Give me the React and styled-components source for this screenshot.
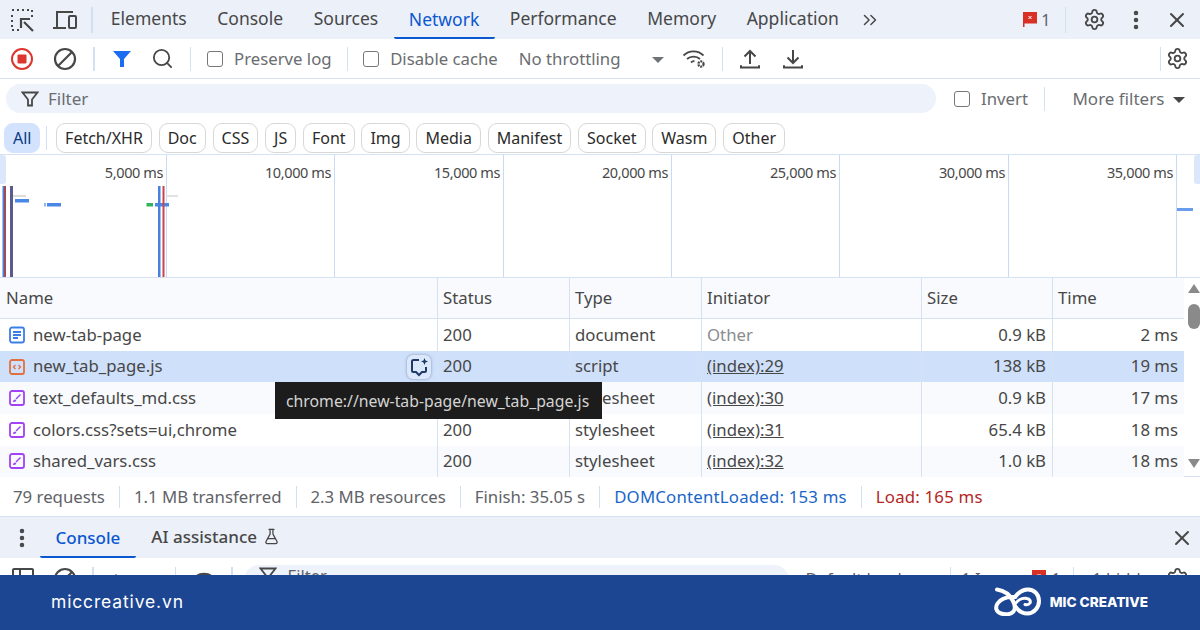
import styled, { createGlobalStyle } from "styled-components";
import { Settings, X, EllipsisVertical, ChevronsRight, Search, FlaskConical, Eye } from "lucide-react";

const GlobalStyle = createGlobalStyle`
  html, body { margin: 0; padding: 0; background: #fff; }
  body { font-family: "Noto Sans", "Open Sans", sans-serif; color: #474747; }
  * { box-sizing: border-box; }
`;

const Page = styled.div`
  width: 1200px;
  height: 630px;
  overflow: hidden;
  display: flex;
  flex-direction: column;
`;

const TabBar = styled.div`
  height: 39px;
  flex: none;
  display: flex;
  align-items: center;
  background: #ebf0f9;
  padding-left: 10px;
`;

const IconSlot = styled.span`
  display: inline-flex;
  align-items: center;
  justify-content: center;
  flex: none;
  width: ${(p) => p.$w || 24}px;
  margin-right: ${(p) => p.$mr || 0}px;
  margin-left: ${(p) => p.$ml || 0}px;
  color: ${(p) => p.$color || "#474747"};
`;

const Divider = styled.span`
  flex: none;
  width: 1.5px;
  height: ${(p) => p.$h || 24}px;
  background: #d3e0f3;
  margin-left: ${(p) => p.$ml || 0}px;
  margin-right: ${(p) => p.$mr || 0}px;
`;

const Tab = styled.div`
  height: 39px;
  padding: 0 15.3px;
  display: flex;
  align-items: center;
  font-size: 17.5px;
  line-height: 1;
  white-space: nowrap;
  color: ${(p) => (p.$active ? "#0b57d0" : "#474747")};
  border-bottom: 2.5px solid ${(p) => (p.$active ? "#0b57d0" : "transparent")};
  padding-top: ${(p) => (p.$active ? "2.5px" : 0)};
  border-bottom-left-radius: 2px;
  border-bottom-right-radius: 2px;
`;

const Spacer = styled.div`
  flex: 1;
`;

const IssueCount = styled.span`
  font-size: 16px;
  color: #5f6368;
  margin-left: 4px;
`;

const Toolbar = styled.div`
  height: 40px;
  flex: none;
  display: flex;
  align-items: center;
  background: #fff;
  border-bottom: 1.5px solid #d6e2f3;
  padding-left: 10px;
`;

const CheckItem = styled.label`
  display: flex;
  align-items: center;
  gap: 11px;
  font-size: 16.75px;
  color: #6a6d70;
  white-space: nowrap;
  margin-left: ${(p) => p.$ml || 0}px;
`;

const Box = styled.span`
  width: 16px;
  height: 16px;
  border: 1.5px solid #75787b;
  border-radius: 3px;
  flex: none;
`;

const Throttle = styled.span`
  font-size: 16.75px;
  color: #6a6d70;
  white-space: nowrap;
  margin-left: 21px;
`;

const Caret = styled.span`
  width: 0;
  height: 0;
  flex: none;
  border-left: ${(p) => p.$s || 6}px solid transparent;
  border-right: ${(p) => p.$s || 6}px solid transparent;
  border-top: ${(p) => p.$s || 6}px solid ${(p) => p.$color || "#6f7276"};
  margin-left: ${(p) => p.$ml || 0}px;
  margin-top: 2px;
`;

const FilterRow = styled.div`
  height: 39px;
  flex: none;
  display: flex;
  align-items: center;
  padding: 0 18px 0 6px;
`;

const FilterPill = styled.div`
  width: 930px;
  height: 29px;
  flex: none;
  border-radius: 15px;
  background: #edf2fb;
  display: flex;
  align-items: center;
  padding-left: 15px;
  gap: 9px;
  font-size: 17px;
  color: #6a6d70;
`;

const MoreFilters = styled.span`
  font-size: 17px;
  color: #6a6d70;
  white-space: nowrap;
`;

const ChipRow = styled.div`
  height: 37px;
  flex: none;
  display: flex;
  align-items: center;
  gap: 6.8px;
  padding: 3px 0 0 4px;
  border-bottom: 1.5px solid #d6e2f3;
`;

const Chip = styled.div`
  height: 30px;
  padding: 0 8px;
  display: flex;
  align-items: center;
  border-radius: 9px;
  font-size: 16px;
  line-height: 1;
  white-space: nowrap;
  color: ${(p) => (p.$active ? "#0a3a85" : "#2b2b2b")};
  background: ${(p) => (p.$active ? "#d3e3fd" : "#fff")};
  border: 1px solid ${(p) => (p.$active ? "#d3e3fd" : "#d7d7d7")};
`;

const ChipGap = styled.span`
  width: 1px;
  height: 24px;
  background: #d3e0f3;
  margin: 0 2px 0 -1px;
  flex: none;
`;

const Overview = styled.div`
  position: relative;
  height: 123px;
  flex: none;
  display: flex;
  border-bottom: 1.5px solid #d6e2f3;
`;

const Tick = styled.div`
  width: ${(p) => p.$w}px;
  flex: none;
  border-right: 1.5px solid ${(p) => (p.$last ? "transparent" : "#c9daf5")};
  text-align: right;
  font-size: 14.5px;
  letter-spacing: -0.4px;
  color: #474747;
  padding: 7px 3px 0 0;
  white-space: nowrap;
`;

const OverviewChart = styled.svg`
  position: absolute;
  left: 0;
  top: 0;
`;

const Table = styled.div`
  position: relative;
  flex: none;
  height: 199px;
  display: flex;
  border-bottom: 1.5px solid #d6e2f3;
`;

const Rows = styled.div`
  width: 1184px;
  flex: none;
`;

const Row = styled.div`
  display: grid;
  grid-template-columns: 437px 132px 132px 220px 131px 132px;
  height: ${(p) => p.$h}px;
  background: ${(p) => p.$bg || "#fff"};
  border-bottom: ${(p) => (p.$head ? "1.5px solid #d6e2f3" : "none")};
`;

const Cell = styled.div`
  display: flex;
  align-items: center;
  justify-content: ${(p) => (p.$right ? "flex-end" : "flex-start")};
  padding: 0 6px 0 ${(p) => (p.$first ? 6 : 5)}px;
  font-size: 16.75px;
  line-height: 1;
  white-space: nowrap;
  color: ${(p) => p.$color || "#474747"};
  text-decoration: ${(p) => (p.$link ? "underline" : "none")};
  border-left: ${(p) => (p.$first ? "none" : "1px solid #d6e2f3")};
`;

const NameText = styled.span`
  margin-left: 7px;
  flex: 1;
`;

const AiButton = styled.span`
  width: 24px;
  height: 24px;
  flex: none;
  border-radius: 6px;
  background: #dbe7fb;
  box-shadow: 0 0 3px rgba(30, 50, 90, 0.45);
  display: flex;
  align-items: center;
  justify-content: center;
`;

const Tooltip = styled.div`
  position: absolute;
  left: 275px;
  top: 104px;
  width: 327px;
  height: 37px;
  background: #1c1c1c;
  color: #d4d4d4;
  font-size: 15.8px;
  display: flex;
  align-items: center;
  padding-left: 11px;
  white-space: nowrap;
`;

const Scrollbar = styled.div`
  width: 16px;
  flex: none;
  display: flex;
  flex-direction: column;
  align-items: center;
  padding: 6px 0 0 3px;
  background: #fff;
`;

const Arrow = styled.span`
  width: 0;
  height: 0;
  border-left: 6.5px solid transparent;
  border-right: 6.5px solid transparent;
  border-top: ${(p) => (p.$down ? "9px solid #8a8a8a" : "none")};
  border-bottom: ${(p) => (p.$down ? "none" : "9px solid #8a8a8a")};
`;

const Thumb = styled.span`
  width: 12px;
  height: 25px;
  border-radius: 6px;
  background: #8a8a8a;
  margin-top: 11px;
  margin-bottom: auto;
`;

const DownArrow = styled(Arrow)`
  margin-bottom: 8px;
`;

const Summary = styled.div`
  height: 40px;
  flex: none;
  display: flex;
  align-items: center;
  padding-left: 13px;
  font-size: 16.8px;
  white-space: nowrap;
  border-bottom: 1.5px solid #d6e2f3;
`;

const Stat = styled.span`
  color: ${(p) => p.$color || "#5f6368"};
  letter-spacing: ${(p) => p.$ls || 0}px;
  padding-right: 14px;
  margin-right: 14px;
  border-right: ${(p) => (p.$plain ? "none" : "1.5px solid #d3e0f3")};
  line-height: 22px;
`;

const DrawerTabs = styled.div`
  height: 41px;
  flex: none;
  display: flex;
  align-items: center;
  background: #ebf0f9;
  padding-left: 10px;
`;

const DrawerTab = styled(Tab)`
  height: 41px;
  padding-left: 15.5px;
  padding-right: 15.5px;
  gap: 6px;
  font-weight: 500;
  font-size: 17px;
`;

const DrawerTools = styled.div`
  height: 17px;
  flex: none;
  overflow: hidden;
  display: flex;
  align-items: flex-start;
  padding: 9px 0 0 11px;
  font-size: 16.5px;
  line-height: 20px;
  color: #5f6368;
  white-space: nowrap;
`;

const ClippedPill = styled.div`
  width: 545px;
  height: 30px;
  margin: -2px 17px 0 0;
  flex: none;
  border-radius: 15px;
  background: #edf2fb;
  padding: 1px 0 0 15px;
  display: flex;
  gap: 11px;
`;

const ToolText = styled.span`
  flex: none;
  margin: 2px ${(p) => p.$mr || 0}px 0 ${(p) => p.$ml || 0}px;
`;

const ToolFlag = styled.span`
  flex: none;
  margin-top: 3px;
  line-height: 0;
`;

const Footer = styled.div`
  flex: 1;
  background: #1c4592;
  display: flex;
  align-items: center;
  justify-content: space-between;
  padding: 0 52px 2px 51px;
  color: #fff;
`;

const Domain = styled.span`
  font-family: "Inter", sans-serif;
  font-size: 17.5px;
  letter-spacing: 0.85px;
`;

const Brand = styled.div`
  display: flex;
  align-items: center;
  gap: 9px;
`;

const BrandName = styled.span`
  font-family: "Inter", sans-serif;
  font-size: 13.6px;
  font-weight: 800;
`;

const InspectIcon = () => (
  <svg width="24" height="24" viewBox="0 0 24 24" fill="none" stroke="#474747" strokeWidth="2">
    <path d="M2 2h2M7 2h2M12 2h2M17 2h2M22 2v2M22 7v2M2 7v2M2 12v2M2 17v2M2 22h2M7 22h2" />
    <path d="M23 23l-9-9M11 20v-9h9" strokeWidth="2.2" />
  </svg>
);

const DeviceIcon = () => (
  <svg width="26" height="22" viewBox="0 0 26 22" fill="none" stroke="#474747" strokeWidth="2">
    <path d="M5 18V3h16M1 19h13" />
    <rect x="17" y="7" width="7" height="12" rx="1" />
  </svg>
);

const RecordIcon = () => (
  <svg width="24" height="24" viewBox="0 0 24 24">
    <circle cx="12" cy="12" r="10" fill="none" stroke="#dc362e" strokeWidth="2" />
    <rect x="7.5" y="7.5" width="9" height="9" rx="1" fill="#dc362e" />
  </svg>
);

const ClearIcon = () => (
  <svg width="24" height="24" viewBox="0 0 24 24" fill="none" stroke="#474747" strokeWidth="2.2">
    <circle cx="12" cy="12" r="10" />
    <path d="M19 5L5 19" />
  </svg>
);

const SolidFunnel = () => (
  <svg width="20" height="20" viewBox="0 0 20 20">
    <path d="M1 2h18l-7 8v8H8v-8z" fill="#1a6cf0" />
  </svg>
);

const OutlineFunnel = () => (
  <svg width="18" height="18" viewBox="0 0 18 18" fill="none" stroke="#474747" strokeWidth="1.8">
    <path d="M1.5 2.5h15l-5.5 7v6h-4v-6z" />
  </svg>
);

const WifiGear = () => (
  <svg width="26" height="22" viewBox="0 0 26 22" fill="none" stroke="#474747" strokeWidth="1.8">
    <path d="M1.5 7.5C7 2 16 2 21.5 7.5M5 11c3.5-3.3 9.5-3.3 13 0M9 14.5c1-1 2.5-1.5 3.5-1.2" />
    <circle cx="19" cy="16" r="2.6" strokeWidth="2.2" strokeDasharray="2 0.8" />
  </svg>
);

const UploadIcon = () => (
  <svg width="22" height="22" viewBox="0 0 22 22" fill="none" stroke="#474747" strokeWidth="2">
    <path d="M11 16V3M5.5 8.5L11 3l5.5 5.5" />
    <path d="M2 18v1.5h18V18" strokeLinecap="round" />
  </svg>
);

const DownloadIcon = () => (
  <svg width="22" height="22" viewBox="0 0 22 22" fill="none" stroke="#474747" strokeWidth="2">
    <path d="M11 2v13M5.5 9.5L11 15l5.5-5.5" />
    <path d="M2 18v1.5h18V18" strokeLinecap="round" />
  </svg>
);

const DockIcon = () => (
  <svg width="24" height="22" viewBox="0 0 24 22" fill="none" stroke="#474747" strokeWidth="2">
    <rect x="2" y="2" width="20" height="18" rx="1" />
    <path d="M9 2v18" />
  </svg>
);

const IssueFlag = () => (
  <svg width="14" height="15" viewBox="0 0 14 15">
    <path d="M0 0h14v11.5H1.5V15H0z" fill="#d93025" />
    <path d="M5.5 4l3 3M8.5 4l-3 3" stroke="#fff" strokeWidth="1" />
  </svg>
);

const FileIcon = ({ kind }) => {
  if (kind === "doc")
    return (
      <svg width="18" height="18" viewBox="0 0 18 18" fill="none" stroke="#3b7ee8" strokeWidth="1.8">
        <rect x="2" y="1.5" width="14" height="15" rx="2" />
        <path d="M5 6h8M5 9h8M5 12h5" />
      </svg>
    );
  if (kind === "script")
    return (
      <svg width="18" height="18" viewBox="0 0 18 18" fill="none" stroke="#e0703f" strokeWidth="1.8">
        <rect x="2" y="2" width="14" height="14" rx="2" />
        <path d="M7.5 7L5.5 9l2 2M10.5 7l2 2-2 2" strokeWidth="1.3" />
      </svg>
    );
  return (
    <svg width="18" height="18" viewBox="0 0 18 18" fill="none" stroke="#a142f4" strokeWidth="1.8">
      <rect x="2" y="2" width="14" height="14" rx="2" />
      <path d="M12.5 5.5L8 10" strokeWidth="1.5" />
      <path d="M5 13c0-1.5 1-2.5 2-2.5s1.500.8 1 1.500-1.500 1-3 1z" fill="#a142f4" stroke="none" />
    </svg>
  );
};

const AiIcon = () => (
  <svg width="19" height="20" viewBox="0 0 19 20" fill="none" stroke="#1f3a66" strokeWidth="2">
    <path d="M9 3H3.5A1.5 1.5 0 0 0 2 4.5v9A1.5 1.5 0 0 0 3.5 15H6l3 3 3-3h2.5a1.5 1.5 0 0 0 1.5-1.5V10" />
    <path d="M14.5 1l1 2.5L18 4.5l-2.5 1-1 2.5-1-2.5-2.5-1 2.5-1z" fill="#1f3a66" stroke="none" />
  </svg>
);

const MicLogo = () => (
  <svg width="47" height="29" viewBox="0 0 47 29" fill="none" stroke="#fff" strokeWidth="4" strokeLinecap="round">
    <path d="M3 2.5C10 3.5 16 8 19 14c2 4 2.5 8 .5 10.5-2.5 3-8 3.5-12.5 2-5-1.5-6-6-3.5-10C7 11 14 9.5 21 10" />
    <path d="M21 10c3-4 8-7.5 13-7.5 6.5 0 11 5 11 11.5S40 26.500 33.500 26.500c-5 0-9-2.500-12-7" />
    <path d="M22 16c2.5-3.500 7-5.500 11-4.500 2.500.5 4 2.500 3 4.500-1 1.500-3 2-5 1.500" strokeWidth="3" />
  </svg>
);

const tabs = ["Elements", "Console", "Sources", "Network", "Performance", "Memory", "Application"];
const chips = ["Fetch/XHR", "Doc", "CSS", "JS", "Font", "Img", "Media", "Manifest", "Socket", "Wasm", "Other"];
const ticks = [
  ["5,000 ms", 167],
  ["10,000 ms", 168],
  ["15,000 ms", 169],
  ["20,000 ms", 168],
  ["25,000 ms", 168],
  ["30,000 ms", 169],
  ["35,000 ms", 168],
  ["", 23],
];

const requests = [
  { kind: "doc", name: "new-tab-page", type: "document", init: "Other", size: "0.9 kB", time: "2 ms", h: 32 },
  { kind: "script", name: "new_tab_page.js", type: "script", init: "(index):29", size: "138 kB", time: "19 ms", h: 31, bg: "#cfe0fb" },
  { kind: "css", name: "text_defaults_md.css", type: "stylesheet", init: "(index):30", size: "0.9 kB", time: "17 ms", h: 32, bg: "#f8fafd" },
  { kind: "css", name: "colors.css?sets=ui,chrome", type: "stylesheet", init: "(index):31", size: "65.4 kB", time: "18 ms", h: 32 },
  { kind: "css", name: "shared_vars.css", type: "stylesheet", init: "(index):32", size: "1.0 kB", time: "18 ms", h: 30.5, bg: "#f8fafd" },
];

function App() {
  return (
    <Page>
      <GlobalStyle />
      <TabBar>
        <IconSlot $w={24} $mr={18}><InspectIcon /></IconSlot>
        <IconSlot $w={26} $mr={13}><DeviceIcon /></IconSlot>
        <Divider $h={26} $mr={3} />
        {tabs.map((t) => (
          <Tab key={t} $active={t === "Network"}>{t}</Tab>
        ))}
        <IconSlot $w={22} $ml={5}><ChevronsRight size={24} strokeWidth={1.6} /></IconSlot>
        <Spacer />
        <IssueFlag />
        <IssueCount>1</IssueCount>
        <Divider $h={26} $ml={14} $mr={16} />
        <IconSlot $w={24} $mr={18}><Settings size={23} strokeWidth={1.9} /></IconSlot>
        <IconSlot $w={24} $mr={17}><EllipsisVertical size={24} strokeWidth={2.5} /></IconSlot>
        <IconSlot $w={24} $mr={11}><X size={24} strokeWidth={2} /></IconSlot>
      </TabBar>

      <Toolbar>
        <IconSlot $w={24} $mr={19}><RecordIcon /></IconSlot>
        <IconSlot $w={24} $mr={16}><ClearIcon /></IconSlot>
        <Divider $mr={17} />
        <IconSlot $w={20} $mr={19}><SolidFunnel /></IconSlot>
        <IconSlot $w={24} $mr={15}><Search size={23} strokeWidth={1.9} /></IconSlot>
        <Divider $mr={16} />
        <CheckItem><Box />Preserve log</CheckItem>
        <Divider $ml={15} $mr={15} />
        <CheckItem><Box />Disable cache</CheckItem>
        <Throttle>No throttling</Throttle>
        <Caret $ml={31} />
        <IconSlot $w={26} $ml={18} $mr={14}><WifiGear /></IconSlot>
        <Divider $mr={15} />
        <IconSlot $w={24} $mr={19}><UploadIcon /></IconSlot>
        <IconSlot $w={24}><DownloadIcon /></IconSlot>
        <Spacer />
        <Divider $mr={4} />
        <IconSlot $w={24} $mr={11}><Settings size={23} strokeWidth={1.9} /></IconSlot>
      </Toolbar>

      <FilterRow>
        <FilterPill>
          <OutlineFunnel />
          Filter
        </FilterPill>
        <CheckItem $ml={18}><Box />Invert</CheckItem>
        <Divider $ml={16} $mr={27} />
        <MoreFilters>More filters</MoreFilters>
        <Caret $ml={9} $color="#474747" />
      </FilterRow>

      <ChipRow>
        <Chip $active>All</Chip>
        <ChipGap />
        {chips.map((c) => (
          <Chip key={c}>{c}</Chip>
        ))}
      </ChipRow>

      <Overview>
        {ticks.map(([label, w], i) => (
          <Tick key={i} $w={w} $last={i === ticks.length - 1}>{label}</Tick>
        ))}
        <OverviewChart width="1200" height="122" viewBox="0 0 1200 122">
          <rect x="-3" y="0" width="9" height="29" rx="3" fill="#dbe7fb" />
          <rect x="1194" y="0" width="9" height="29" rx="3" fill="#dbe7fb" />
          <rect x="2.5" y="31" width="1.5" height="91" fill="#4a80dd" />
          <rect x="4" y="31" width="2" height="91" fill="#a14a55" />
          <rect x="10" y="31" width="3" height="91" fill="#5c5a8c" />
          <rect x="13" y="40" width="13" height="2" fill="#dcdcdc" />
          <rect x="15" y="44" width="14" height="3.5" fill="#4a88e8" />
          <rect x="44" y="48" width="2" height="3.5" fill="#8fb6ef" />
          <rect x="47" y="48" width="14" height="3.5" fill="#4a88e8" />
          <rect x="146.5" y="48" width="6.5" height="3.5" fill="#34b45c" />
          <rect x="155" y="48" width="14" height="3.5" fill="#4a88e8" />
          <rect x="166" y="40" width="12" height="2" fill="#e2e2e2" />
          <rect x="158" y="31" width="2.5" height="91" fill="#4a80dd" />
          <rect x="162.5" y="31" width="2" height="91" fill="#c9434a" />
          <rect x="1177" y="53" width="16" height="3" fill="#6a9cec" />
        </OverviewChart>
      </Overview>

      <Table>
        <Rows>
          <Row $h={41} $head $bg="#f8fafd">
            <Cell $first>Name</Cell>
            <Cell>Status</Cell>
            <Cell>Type</Cell>
            <Cell>Initiator</Cell>
            <Cell>Size</Cell>
            <Cell>Time</Cell>
          </Row>
          {requests.map((r) => (
            <Row key={r.name} $h={r.h} $bg={r.bg}>
              <Cell $first>
                <IconSlot $w={18} $ml={2}><FileIcon kind={r.kind} /></IconSlot>
                <NameText>{r.name}</NameText>
                {r.kind === "script" && <AiButton><AiIcon /></AiButton>}
              </Cell>
              <Cell>200</Cell>
              <Cell>{r.type}</Cell>
              <Cell $link={r.init !== "Other"} $color={r.init === "Other" ? "#8a8d90" : "#474747"}>{r.init}</Cell>
              <Cell $right>{r.size}</Cell>
              <Cell $right>{r.time}</Cell>
            </Row>
          ))}
        </Rows>
        <Scrollbar>
          <Arrow />
          <Thumb />
          <DownArrow $down />
        </Scrollbar>
        <Tooltip>chrome://new-tab-page/new_tab_page.js</Tooltip>
      </Table>

      <Summary>
        <Stat>79 requests</Stat>
        <Stat>1.1 MB transferred</Stat>
        <Stat>2.3 MB resources</Stat>
        <Stat>Finish: 35.05 s</Stat>
        <Stat $color="#1a66c9" $ls={0.2}>DOMContentLoaded: 153 ms</Stat>
        <Stat $color="#b3261e" $plain $ls={0.2}>Load: 165 ms</Stat>
      </Summary>

      <DrawerTabs>
        <IconSlot $w={24} $mr={6}><EllipsisVertical size={24} strokeWidth={2.5} /></IconSlot>
        <DrawerTab $active>Console</DrawerTab>
        <DrawerTab>AI assistance<FlaskConical size={17} strokeWidth={1.8} /></DrawerTab>
        <Spacer />
        <IconSlot $w={24} $mr={6}><X size={24} strokeWidth={2} /></IconSlot>
      </DrawerTabs>

      <DrawerTools>
        <IconSlot $w={24} $mr={18}><DockIcon /></IconSlot>
        <IconSlot $w={24} $mr={15}><ClearIcon /></IconSlot>
        <Divider $mr={20} />
        <ToolText $mr={35}>top</ToolText>
        <Divider $mr={14} />
        <IconSlot $w={28} $mr={13}><Eye size={30} strokeWidth={1.8} /></IconSlot>
        <Divider $mr={11} />
        <ClippedPill>
          <OutlineFunnel />
          Filter
        </ClippedPill>
        <ToolText $mr={40}>Default levels</ToolText>
        <Divider $mr={10} />
        <ToolText $mr={12}>1 Issue:</ToolText>
        <ToolFlag><IssueFlag /></ToolFlag>
        <ToolText $ml={5} $mr={12}>1</ToolText>
        <Divider $mr={18} />
        <ToolText>1 hidden</ToolText>
        <Spacer />
        <IconSlot $w={24} $mr={11}><Settings size={23} strokeWidth={1.9} /></IconSlot>
      </DrawerTools>

      <Footer>
        <Domain>miccreative.vn</Domain>
        <Brand>
          <MicLogo />
          <BrandName>MIC CREATIVE</BrandName>
        </Brand>
      </Footer>
    </Page>
  );
}

export default App;
